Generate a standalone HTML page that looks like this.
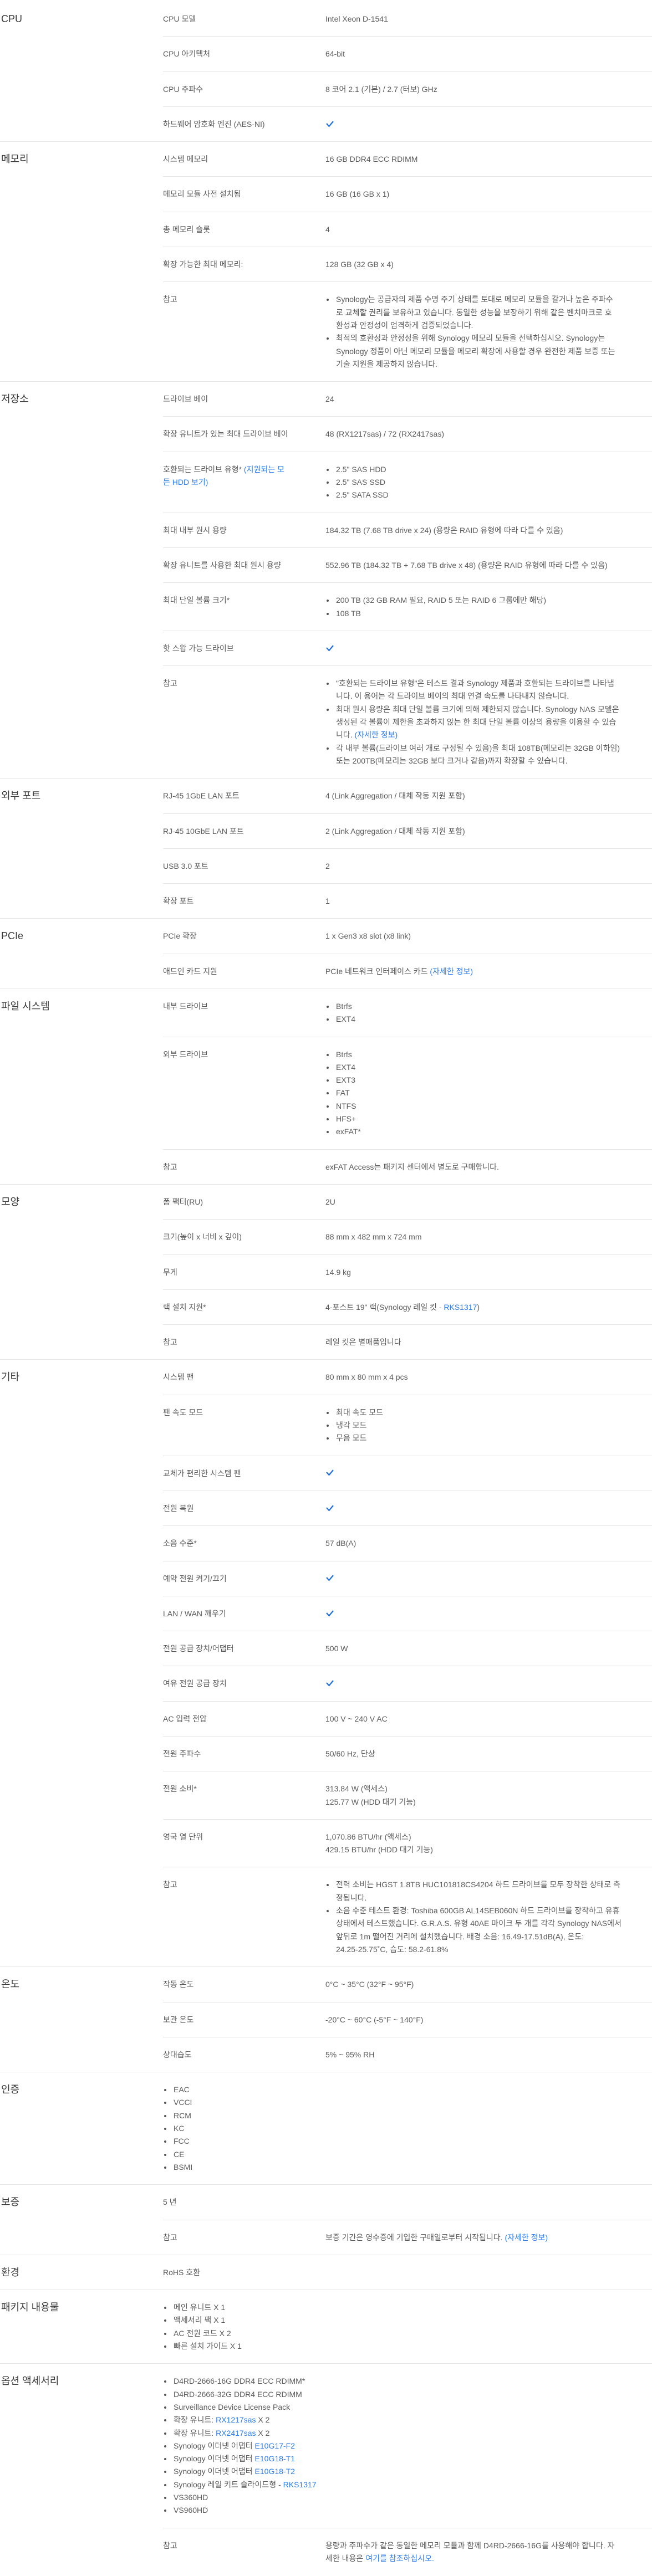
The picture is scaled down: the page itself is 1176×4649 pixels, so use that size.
<!DOCTYPE html>
<html lang="ko"><head><meta charset="utf-8">
<style>
*{box-sizing:content-box;margin:0;padding:0}
html,body{width:1176px;height:4646px;overflow:hidden;background:#fff}
body{font-family:"Liberation Sans","Noto Sans CJK KR",sans-serif;font-size:14px;color:#5a5a5a;padding-top:3px}
.cat{position:relative;border-bottom:1px solid #e4e4e4}
.ct{position:absolute;left:2px;top:20px;font-size:18px;line-height:23.3px;color:#3a3a3a}
.rows{margin-left:294px}
.r{display:flex;padding:20px 0 19px;border-bottom:1px solid #e4e4e4;line-height:23.3px}
.r:last-child{border-bottom:0}
.l{width:293px;flex:none}
.v{flex:1;white-space:nowrap}
a{color:#2b7de9;text-decoration:none}
ul{list-style:none}
li{position:relative;padding-left:19px}
li::before{content:"";position:absolute;left:2px;top:10px;width:4px;height:4px;border-radius:50%;background:#555}
.ck{display:inline-block;vertical-align:middle;margin-top:-3px}
</style></head><body>

<div class="cat"><div class="ct">CPU</div><div class="rows">
<div class="r"><div class="l">CPU 모델</div><div class="v">Intel Xeon D-1541</div></div>
<div class="r"><div class="l">CPU 아키텍처</div><div class="v">64-bit</div></div>
<div class="r"><div class="l">CPU 주파수</div><div class="v">8 코어 2.1 (기본) / 2.7 (터보) GHz</div></div>
<div class="r"><div class="l">하드웨어 암호화 엔진 (AES-NI)</div><div class="v"><svg class="ck" width="16" height="14" viewBox="0 0 16 14"><polyline points="2,6 6.5,11 14,2" fill="none" stroke="#1f6fd8" stroke-width="2.2"/></svg></div></div>
</div></div>

<div class="cat"><div class="ct">메모리</div><div class="rows">
<div class="r"><div class="l">시스템 메모리</div><div class="v">16 GB DDR4 ECC RDIMM</div></div>
<div class="r"><div class="l">메모리 모듈 사전 설치됨</div><div class="v">16 GB (16 GB x 1)</div></div>
<div class="r"><div class="l">총 메모리 슬롯</div><div class="v">4</div></div>
<div class="r"><div class="l">확장 가능한 최대 메모리:</div><div class="v">128 GB (32 GB x 4)</div></div>
<div class="r"><div class="l">참고</div><div class="v"><ul>
<li>Synology는 공급자의 제품 수명 주기 상태를 토대로 메모리 모듈을 갈거나 높은 주파수<br>로 교체할 권리를 보유하고 있습니다. 동일한 성능을 보장하기 위해 같은 벤치마크로 호<br>환성과 안정성이 엄격하게 검증되었습니다.</li>
<li>최적의 호환성과 안정성을 위해 Synology 메모리 모듈을 선택하십시오. Synology는<br>Synology 정품이 아닌 메모리 모듈을 메모리 확장에 사용할 경우 완전한 제품 보증 또는<br>기술 지원을 제공하지 않습니다.</li>
</ul></div></div>
</div></div>

<div class="cat"><div class="ct">저장소</div><div class="rows">
<div class="r"><div class="l">드라이브 베이</div><div class="v">24</div></div>
<div class="r"><div class="l">확장 유니트가 있는 최대 드라이브 베이</div><div class="v">48 (RX1217sas) / 72 (RX2417sas)</div></div>
<div class="r"><div class="l">호환되는 드라이브 유형* <a>(지원되는 모<br>든 HDD 보기)</a></div><div class="v"><ul><li>2.5" SAS HDD</li><li>2.5" SAS SSD</li><li>2.5" SATA SSD</li></ul></div></div>
<div class="r"><div class="l">최대 내부 원시 용량</div><div class="v">184.32 TB (7.68 TB drive x 24) (용량은 RAID 유형에 따라 다를 수 있음)</div></div>
<div class="r"><div class="l">확장 유니트를 사용한 최대 원시 용량</div><div class="v">552.96 TB (184.32 TB + 7.68 TB drive x 48) (용량은 RAID 유형에 따라 다를 수 있음)</div></div>
<div class="r"><div class="l">최대 단일 볼륨 크기*</div><div class="v"><ul><li>200 TB (32 GB RAM 필요, RAID 5 또는 RAID 6 그룹에만 해당)</li><li>108 TB</li></ul></div></div>
<div class="r"><div class="l">핫 스왑 가능 드라이브</div><div class="v"><svg class="ck" width="16" height="14" viewBox="0 0 16 14"><polyline points="2,6 6.5,11 14,2" fill="none" stroke="#1f6fd8" stroke-width="2.2"/></svg></div></div>
<div class="r"><div class="l">참고</div><div class="v"><ul>
<li>"호환되는 드라이브 유형"은 테스트 결과 Synology 제품과 호환되는 드라이브를 나타냅<br>니다. 이 용어는 각 드라이브 베이의 최대 연결 속도를 나타내지 않습니다.</li>
<li>최대 원시 용량은 최대 단일 볼륨 크기에 의해 제한되지 않습니다. Synology NAS 모델은<br>생성된 각 볼륨이 제한을 초과하지 않는 한 최대 단일 볼륨 이상의 용량을 이용할 수 있습<br>니다. <a>(자세한 정보)</a></li>
<li>각 내부 볼륨(드라이브 여러 개로 구성될 수 있음)을 최대 108TB(메모리는 32GB 이하임)<br>또는 200TB(메모리는 32GB 보다 크거나 같음)까지 확장할 수 있습니다.</li>
</ul></div></div>
</div></div>

<div class="cat"><div class="ct">외부 포트</div><div class="rows">
<div class="r"><div class="l">RJ-45 1GbE LAN 포트</div><div class="v">4 (Link Aggregation / 대체 작동 지원 포함)</div></div>
<div class="r"><div class="l">RJ-45 10GbE LAN 포트</div><div class="v">2 (Link Aggregation / 대체 작동 지원 포함)</div></div>
<div class="r"><div class="l">USB 3.0 포트</div><div class="v">2</div></div>
<div class="r"><div class="l">확장 포트</div><div class="v">1</div></div>
</div></div>

<div class="cat"><div class="ct">PCIe</div><div class="rows">
<div class="r"><div class="l">PCIe 확장</div><div class="v">1 x Gen3 x8 slot (x8 link)</div></div>
<div class="r"><div class="l">애드인 카드 지원</div><div class="v">PCIe 네트워크 인터페이스 카드 <a>(자세한 정보)</a></div></div>
</div></div>

<div class="cat"><div class="ct">파일 시스템</div><div class="rows">
<div class="r"><div class="l">내부 드라이브</div><div class="v"><ul><li>Btrfs</li><li>EXT4</li></ul></div></div>
<div class="r"><div class="l">외부 드라이브</div><div class="v"><ul><li>Btrfs</li><li>EXT4</li><li>EXT3</li><li>FAT</li><li>NTFS</li><li>HFS+</li><li>exFAT*</li></ul></div></div>
<div class="r"><div class="l">참고</div><div class="v">exFAT Access는 패키지 센터에서 별도로 구매합니다.</div></div>
</div></div>

<div class="cat"><div class="ct">모양</div><div class="rows">
<div class="r"><div class="l">폼 팩터(RU)</div><div class="v">2U</div></div>
<div class="r"><div class="l">크기(높이 x 너비 x 깊이)</div><div class="v">88 mm x 482 mm x 724 mm</div></div>
<div class="r"><div class="l">무게</div><div class="v">14.9 kg</div></div>
<div class="r"><div class="l">랙 설치 지원*</div><div class="v">4-포스트 19" 랙(Synology 레일 킷 - <a>RKS1317</a>)</div></div>
<div class="r"><div class="l">참고</div><div class="v">레일 킷은 별매품입니다</div></div>
</div></div>

<div class="cat"><div class="ct">기타</div><div class="rows">
<div class="r"><div class="l">시스템 팬</div><div class="v">80 mm x 80 mm x 4 pcs</div></div>
<div class="r"><div class="l">팬 속도 모드</div><div class="v"><ul><li>최대 속도 모드</li><li>냉각 모드</li><li>무음 모드</li></ul></div></div>
<div class="r"><div class="l">교체가 편리한 시스템 팬</div><div class="v"><svg class="ck" width="16" height="14" viewBox="0 0 16 14"><polyline points="2,6 6.5,11 14,2" fill="none" stroke="#1f6fd8" stroke-width="2.2"/></svg></div></div>
<div class="r"><div class="l">전원 복원</div><div class="v"><svg class="ck" width="16" height="14" viewBox="0 0 16 14"><polyline points="2,6 6.5,11 14,2" fill="none" stroke="#1f6fd8" stroke-width="2.2"/></svg></div></div>
<div class="r"><div class="l">소음 수준*</div><div class="v">57 dB(A)</div></div>
<div class="r"><div class="l">예약 전원 켜기/끄기</div><div class="v"><svg class="ck" width="16" height="14" viewBox="0 0 16 14"><polyline points="2,6 6.5,11 14,2" fill="none" stroke="#1f6fd8" stroke-width="2.2"/></svg></div></div>
<div class="r"><div class="l">LAN / WAN 깨우기</div><div class="v"><svg class="ck" width="16" height="14" viewBox="0 0 16 14"><polyline points="2,6 6.5,11 14,2" fill="none" stroke="#1f6fd8" stroke-width="2.2"/></svg></div></div>
<div class="r"><div class="l">전원 공급 장치/어댑터</div><div class="v">500 W</div></div>
<div class="r"><div class="l">여유 전원 공급 장치</div><div class="v"><svg class="ck" width="16" height="14" viewBox="0 0 16 14"><polyline points="2,6 6.5,11 14,2" fill="none" stroke="#1f6fd8" stroke-width="2.2"/></svg></div></div>
<div class="r"><div class="l">AC 입력 전압</div><div class="v">100 V ~ 240 V AC</div></div>
<div class="r"><div class="l">전원 주파수</div><div class="v">50/60 Hz, 단상</div></div>
<div class="r"><div class="l">전원 소비*</div><div class="v">313.84 W (액세스)<br>125.77 W (HDD 대기 기능)</div></div>
<div class="r"><div class="l">영국 열 단위</div><div class="v">1,070.86 BTU/hr (액세스)<br>429.15 BTU/hr (HDD 대기 기능)</div></div>
<div class="r"><div class="l">참고</div><div class="v"><ul>
<li>전력 소비는 HGST 1.8TB HUC101818CS4204 하드 드라이브를 모두 장착한 상태로 측<br>정됩니다.</li>
<li>소음 수준 테스트 환경: Toshiba 600GB AL14SEB060N 하드 드라이브를 장착하고 유휴<br>상태에서 테스트했습니다. G.R.A.S. 유형 40AE 마이크 두 개를 각각 Synology NAS에서<br>앞뒤로 1m 떨어진 거리에 설치했습니다. 배경 소음: 16.49-17.51dB(A), 온도:<br>24.25-25.75˚C, 습도: 58.2-61.8%</li>
</ul></div></div>
</div></div>

<div class="cat"><div class="ct">온도</div><div class="rows">
<div class="r"><div class="l">작동 온도</div><div class="v">0°C ~ 35°C (32°F ~ 95°F)</div></div>
<div class="r"><div class="l">보관 온도</div><div class="v">-20°C ~ 60°C (-5°F ~ 140°F)</div></div>
<div class="r"><div class="l">상대습도</div><div class="v">5% ~ 95% RH</div></div>
</div></div>

<div class="cat"><div class="ct">인증</div><div class="rows">
<div class="r"><div class="v"><ul><li>EAC</li><li>VCCI</li><li>RCM</li><li>KC</li><li>FCC</li><li>CE</li><li>BSMI</li></ul></div></div>
</div></div>

<div class="cat"><div class="ct">보증</div><div class="rows">
<div class="r"><div class="v">5 년</div></div>
<div class="r"><div class="l">참고</div><div class="v">보증 기간은 영수증에 기입한 구매일로부터 시작됩니다. <a>(자세한 정보)</a></div></div>
</div></div>

<div class="cat"><div class="ct">환경</div><div class="rows">
<div class="r"><div class="v">RoHS 호환</div></div>
</div></div>

<div class="cat"><div class="ct">패키지 내용물</div><div class="rows">
<div class="r"><div class="v"><ul><li>메인 유니트 X 1</li><li>액세서리 팩 X 1</li><li>AC 전원 코드 X 2</li><li>빠른 설치 가이드 X 1</li></ul></div></div>
</div></div>

<div class="cat" style="border-bottom:0"><div class="ct">옵션 액세서리</div><div class="rows">
<div class="r"><div class="v"><ul>
<li>D4RD-2666-16G DDR4 ECC RDIMM*</li>
<li>D4RD-2666-32G DDR4 ECC RDIMM</li>
<li>Surveillance Device License Pack</li>
<li>확장 유니트: <a>RX1217sas</a> X 2</li>
<li>확장 유니트: <a>RX2417sas</a> X 2</li>
<li>Synology 이더넷 어댑터 <a>E10G17-F2</a></li>
<li>Synology 이더넷 어댑터 <a>E10G18-T1</a></li>
<li>Synology 이더넷 어댑터 <a>E10G18-T2</a></li>
<li>Synology 레일 키트 슬라이드형 - <a>RKS1317</a></li>
<li>VS360HD</li>
<li>VS960HD</li>
</ul></div></div>
<div class="r"><div class="l">참고</div><div class="v">용량과 주파수가 같은 동일한 메모리 모듈과 함께 D4RD-2666-16G를 사용해야 합니다. 자<br>세한 내용은 <a>여기를 참조하십시오.</a></div></div>
</div></div>

</body></html>
